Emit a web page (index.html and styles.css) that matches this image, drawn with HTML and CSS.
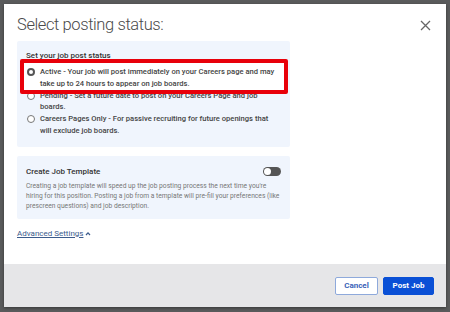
FILE: index.html
```html
<!DOCTYPE html>
<html>
<head>
<meta charset="utf-8">
<link rel="stylesheet" href="styles.css">
</head>
<body>
<div class="overlay">
  <div class="modal">
    <div class="body">
      <div class="head">
        <h1 class="title">Select posting status:</h1>
        <svg class="close" width="11" height="11" viewBox="0 0 11 11"><path d="M1 1L10 10M10 1L1 10" stroke="#666" stroke-width="1.3"/></svg>
      </div>
      <div class="panel status">
        <div class="label">Set your job post status</div>
        <div class="options">
          <div class="opt first"><span class="radio on"></span><span class="txt">Active - Your job will post immediately on your Careers page and may take up to 24 hours to appear on job boards.</span></div>
          <div class="opt"><span class="radio"></span><span class="txt">Pending - Set a future date to post on your Careers Page and job boards.</span></div>
          <div class="opt"><span class="radio"></span><span class="txt">Careers Pages Only - For passive recruiting for future openings that will exclude job boards.</span></div>
        </div>
        <div class="highlight"></div>
      </div>
      <div class="panel template">
        <div class="trow">
          <div class="ttl">Create Job Template</div>
          <span class="toggle"><span class="knob"></span></span>
        </div>
        <p class="desc">Creating a job template will speed up the job posting process the next time you're hiring for this position. Posting a job from a template will pre-fill your preferences (like prescreen questions) and job description.</p>
      </div>
      <a class="adv">Advanced Settings<svg width="6" height="5" viewBox="0 0 6 5"><path d="M1 4L3 1.8L5 4" stroke="#3b5b8c" stroke-width="1.2" fill="none"/></svg></a>
    </div>
    <div class="footer">
      <button class="btn cancel">Cancel</button>
      <button class="btn post">Post Job</button>
    </div>
  </div>
</div>
</body>
</html>
```
FILE: styles.css
```css
* { box-sizing: border-box; }
html, body { margin: 0; padding: 0; }
body { width: 450px; height: 312px; background: #5a5b5c; font-family: Roboto, "Liberation Sans", sans-serif; overflow: hidden; }
.overlay { padding: 4px 4px 0 4px; }
.modal { width: 442px; height: 303px; background: #fff; display: flex; flex-direction: column; box-shadow: 0 1px 3px rgba(0,0,0,.4); }
.body { flex: 1; padding: 0 13px; }
.head { display: flex; justify-content: space-between; align-items: center; height: 37px; padding-top: 4px; }
.title { margin: 0; font-size: 16.5px; font-weight: 300; color: #4a4a4a; letter-spacing: -0.4px; }
.close { margin-right: 2px; margin-top: 1px; }
.panel { background: #f0f5fd; border-radius: 2px; width: 273px; }
.status { position: relative; padding: 10px 9px 8px 9px; height: 106px; }
.label { font-size: 8px; font-weight: 500; color: #333; line-height: 10px; margin-bottom: 5px; }
.opt { display: flex; align-items: flex-start; gap: 5px; font-size: 7.6px; font-weight: 500; color: #444; line-height: 11.8px; }
.opt.first { position: relative; z-index: 1; }
.radio { flex: none; width: 8px; height: 8px; border-radius: 50%; border: 1px solid #777; background: #fff; margin: 2px 0 0 1px; }
.radio.on { border: 2.5px solid #555; }
.highlight { position: absolute; z-index: 0; left: 3px; top: 18px; width: 268px; height: 35px; border: 4px solid #e8000a; border-radius: 2px; background: #fff; }
.template { margin-top: 9px; padding: 9px 9px 8px 9px; height: 63px; }
.trow { display: flex; justify-content: space-between; align-items: center; height: 12px; margin-bottom: 4px; }
.ttl { font-size: 8px; font-weight: 500; color: #333; }
.toggle { width: 18px; height: 9px; border-radius: 5px; background: #555; position: relative; margin-right: 0; }
.knob { position: absolute; left: 1px; top: 1px; width: 7px; height: 7px; border-radius: 50%; background: #fff; }
.desc { margin: 0; font-size: 6.7px; color: #777; line-height: 10px; }
.adv { display: inline-flex; align-items: center; gap: 2px; margin-top: 10px; font-size: 8px; color: #3b5b8c; text-decoration: underline; }
.footer { height: 43px; background: #e6e6e8; display: flex; justify-content: flex-end; align-items: center; gap: 5px; padding: 0 12px 0 0; }
.btn { font-family: Roboto, "Liberation Sans", sans-serif; font-size: 8px; font-weight: 700; height: 18px; border-radius: 2px; padding: 0; }
.cancel { width: 43px; background: #fff; border: 1px solid #8ea9db; color: #3a63b8; }
.post { width: 51px; background: #0a50d6; border: 1px solid #0a50d6; color: #fff; }
```
